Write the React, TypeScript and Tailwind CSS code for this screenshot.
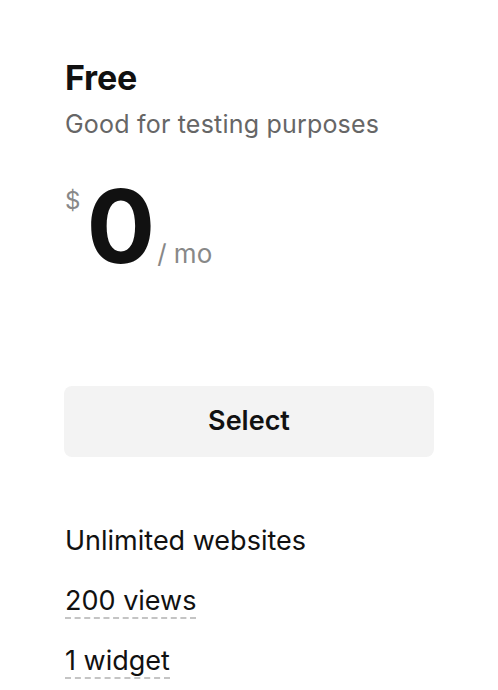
import React from 'react';

const features = [
  { label: 'Unlimited websites', hint: false },
  { label: '200 views', hint: true },
  { label: '1 widget', hint: true },
];

const App: React.FC = () => {
  return (
    <div className="min-h-screen bg-white font-['Inter','Liberation_Sans',sans-serif] text-[#111]">
      <div className="pl-[65px] pr-[64px] pt-[58px]">
        <h2 className="text-[34px] leading-[40px] font-bold tracking-[-0.2px]">Free</h2>
        <p className="mt-[10px] text-[25px] leading-[32px] tracking-[0.2px] text-[#666]">Good for testing purposes</p>

        <div className="mt-[34px] flex items-start">
          <span className="mt-[12px] text-[24px] leading-[30px] text-[#888]">$</span>
          <div className="ml-[6px] flex items-baseline">
            <span className="text-[102px] leading-[104px] font-bold tracking-[-2px]">0</span>
            <span className="ml-[4px] text-[26px] text-[#888]">/ mo</span>
          </div>
        </div>

        <button className="mt-[108px] -ml-px w-[calc(100%+1px)] h-[71px] rounded-lg bg-[#f3f3f3] text-[27px] font-semibold text-[#111]">
          Select
        </button>

        <ul className="mt-[65px] flex flex-col gap-[22px]">
          {features.map((f) => (
            <li key={f.label} className="text-[27px] leading-[38px]">
              <span className={f.hint ? 'border-b-2 border-dashed border-[#c4c4c4]' : ''}>{f.label}</span>
            </li>
          ))}
        </ul>
      </div>
    </div>
  );
};

export default App;
